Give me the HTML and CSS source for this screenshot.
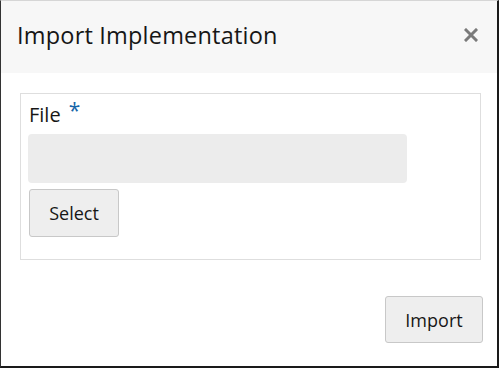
FILE: index.html
```html
<!DOCTYPE html>
<html lang="en">
<head>
  <meta charset="UTF-8" />
  <title>Import Implementation</title>
  <link rel="stylesheet" href="styles.css">
</head>
<body>
  <div class="dialog">
    <!-- Header -->
    <div class="dialog-header">
      <div class="dialog-title">Import Implementation</div>
      <svg class="close-btn" width="14" height="14" viewBox="0 0 14 14">
        <path d="M2 2 L12 12 M12 2 L2 12" stroke="#7a7a7a" stroke-width="3" stroke-linecap="square" />
      </svg>
    </div>

    <!-- Body -->
    <div class="dialog-body">
      <div class="field-box">
        <div class="field-label">File <span class="required">*</span></div>
        <div class="file-input"></div>
        <button class="btn">Select</button>
      </div>
    </div>

    <!-- Footer -->
    <div class="dialog-footer">
      <button class="btn btn-import">Import</button>
    </div>
  </div>
</body>
</html>
```

FILE: styles.css
```css
* {
  box-sizing: border-box;
}

body {
  margin: 0;
  padding: 0;
  font-family: "Open Sans", "Noto Sans", Arial, sans-serif;
  color: #161616;
  background: #fff;
}

.dialog {
  width: 499px;
  height: 368px;
  border-top: 1px solid #d6d6d6;
  border-left: 1px solid #333;
  border-right: 2px solid #1a1a1a;
  border-bottom: 2px solid #1a1a1a;
  display: flex;
  flex-direction: column;
}

.dialog-header {
  height: 72px;
  background: #f7f7f7;
  display: flex;
  align-items: center;
  justify-content: space-between;
  padding: 0 19px 0 16px;
}

.dialog-title {
  font-size: 23.5px;
  margin-top: -5px;
  letter-spacing: 0.2px;
}

.close-btn {
  display: block;
  margin-top: -4px;
}

.dialog-body {
  padding: 20px 16px 0 19px;
}

.field-box {
  border: 1px solid #dedede;
  height: 167px;
  padding: 9px 8px 0 7px;
}

.field-label {
  font-size: 20px;
  line-height: 24px;
  padding-left: 1px;
}

.required {
  color: #1565a8;
  font-size: 21px;
  vertical-align: top;
  position: relative;
  top: -5px;
  margin-left: 3px;
}

.file-input {
  width: 379px;
  height: 49px;
  margin-top: 7px;
  background: #ececec;
  border-radius: 4px;
}

.btn {
  display: block;
  font-family: "Open Sans", "Noto Sans", Arial, sans-serif;
  font-size: 18px;
  color: #161616;
  background: #eeeeee;
  border: 1px solid #c8c8c8;
  border-radius: 3px;
  width: 90px;
  height: 48px;
  margin: 6px 0 0 1px;
  padding: 0;
}

.dialog-footer {
  display: flex;
  justify-content: flex-end;
  padding: 36px 14px 0 0;
}

.btn-import {
  width: 98px;
  height: 47px;
  margin: 0;
}
```
